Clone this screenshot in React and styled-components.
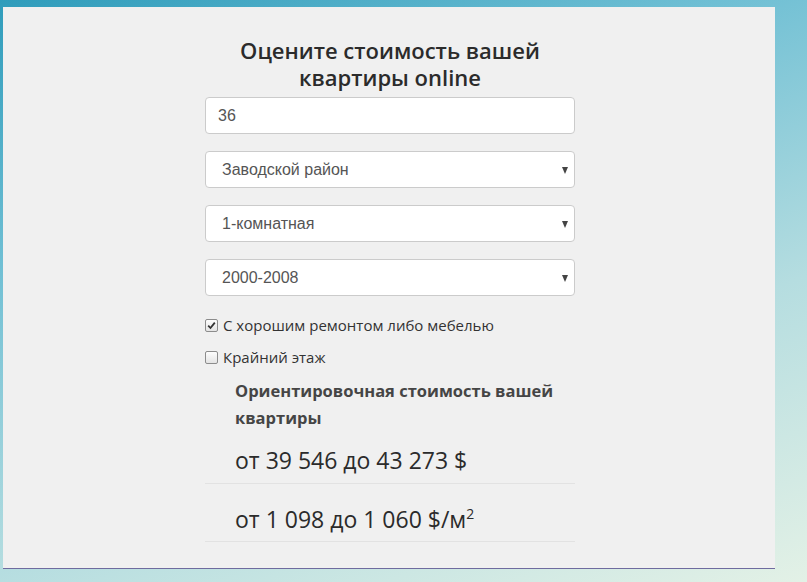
import React from 'react';
import styled, { createGlobalStyle } from 'styled-components';

const GlobalStyle = createGlobalStyle`
    html, body {
        margin: 0;
        padding: 0;
        height: 100%;
    }
    body {
        background: linear-gradient(160deg, #2f9cbb 0%, #6fbfd4 30%, #b5dde0 65%, #e3f1e6 100%);
        min-height: 582px;
        font-family: "Open Sans", "Liberation Sans", sans-serif;
    }
`;

const Page = styled.div`
    padding: 7px 32px 13px 3px;
`;

const Panel = styled.div`
    background: #f0f0f0;
    height: 562px;
    box-sizing: border-box;
    padding-top: 30px;
    padding-left: 2px;
    border-bottom: 1px solid #6f6b9f;
    display: flex;
    justify-content: center;
`;

const Column = styled.div`
    width: 370px;
    display: flex;
    flex-direction: column;
`;

const Title = styled.h2`
    margin: 0 0 6px;
    font-size: 22px;
    line-height: 27px;
    font-weight: 600;
    color: #2b2b2b;
    text-align: center;
`;

const Field = styled.div`
    position: relative;
    height: 37px;
    box-sizing: border-box;
    background: #fff;
    border: 1px solid #cbcbcb;
    border-radius: 4px;
    margin-bottom: 17px;
    display: flex;
    align-items: center;
    padding-left: ${p => (p.$select ? 16 : 12)}px;
    font-family: "Liberation Sans", Arial, sans-serif;
    font-size: 16px;
    color: #555;
`;

const Arrow = styled.span`
    position: absolute;
    right: 6px;
    top: 15px;
    width: 0;
    height: 0;
    border-left: 3.5px solid transparent;
    border-right: 3.5px solid transparent;
    border-top: 7px solid #444;
`;

const CheckRow = styled.label`
    display: flex;
    align-items: center;
    gap: 5px;
    height: 20px;
    margin-top: ${p => p.$first ? 2 : 12}px;
    font-size: 15px;
    color: #333;
`;

const Box = styled.span`
    width: 11px;
    height: 11px;
    border: 1px solid #8c8c8c;
    border-radius: 2px;
    background: linear-gradient(#fdfdfd, #e4e4e4);
    display: flex;
    align-items: center;
    justify-content: center;
`;

const Result = styled.div`
    padding-left: 30px;
    margin-top: 10px;
`;

const ResultTitle = styled.h4`
    margin: 0;
    font-size: 16.5px;
    line-height: 27px;
    font-weight: 700;
    color: #454545;
`;

const Price = styled.div`
    padding-left: 30px;
    font-size: 23px;
    line-height: 30px;
    color: #2b2b2b;
    padding-top: ${p => p.$first ? 14 : 20}px;
    padding-bottom: ${p => p.$first ? 8 : 7}px;
    border-bottom: 1px solid #e2e2e2;

    sup {
        font-size: 14px;
        line-height: 0;
        vertical-align: 9px;
    }
`;

function Checkbox({ checked }) {
    return (
        <Box>
            {checked && (
                <svg width="9" height="9" viewBox="0 0 9 9">
                    <path d="M1.2 4.6 L3.5 7 L7.8 1.6" fill="none" stroke="#333" strokeWidth="1.8" />
                </svg>
            )}
        </Box>
    );
}

export default function App() {
    return (
        <>
            <GlobalStyle />
            <Page>
                <Panel>
                    <Column>
                        <Title>Оцените стоимость вашей<br />квартиры online</Title>
                        <Field>36</Field>
                        <Field $select>Заводской район<Arrow /></Field>
                        <Field $select>1-комнатная<Arrow /></Field>
                        <Field $select>2000-2008<Arrow /></Field>
                        <CheckRow $first><Checkbox checked />С хорошим ремонтом либо мебелью</CheckRow>
                        <CheckRow><Checkbox />Крайний этаж</CheckRow>
                        <Result>
                            <ResultTitle>Ориентировочная стоимость вашей<br />квартиры</ResultTitle>
                        </Result>
                        <Price $first>от 39 546 до 43 273 $</Price>
                        <Price>от 1 098 до 1 060 $/м<sup>2</sup></Price>
                    </Column>
                </Panel>
            </Page>
        </>
    );
}
